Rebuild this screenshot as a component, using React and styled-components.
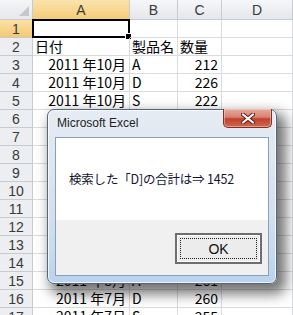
import React from 'react';
import styled, { createGlobalStyle } from 'styled-components';

const GlobalStyle = createGlobalStyle`
  html, body {
    margin: 0;
    padding: 0;
    background: #fff;
    overflow: hidden;
  }
  * { box-sizing: border-box; }
`;

const Screen = styled.div`
  position: relative;
  width: 293px;
  height: 315px;
  overflow: hidden;
  background: #fff;
`;

const Sheet = styled.div`
  display: grid;
  grid-template-columns: 33px 97px 48px 44px 71px;
  grid-template-rows: 20px;
  grid-auto-rows: 18px;
`;

const ColHead = styled.div`
  display: flex;
  align-items: center;
  justify-content: center;
  font-family: "Liberation Sans", Arial, sans-serif;
  font-size: 14px;
  color: #3a3a3a;
  border-right: 1px solid #c6cbd2;
  border-bottom: 1px solid #c6cbd2;
  background: ${p => p.$active
    ? 'linear-gradient(#fbe3ad, #f4cc77)'
    : 'linear-gradient(#f6f7f9, #e4e7eb)'};
  ${p => p.$active && 'border-bottom-color: #e2a93a;'}
`;

const Corner = styled.div`
  position: relative;
  background: linear-gradient(#f4f5f7, #e6e8ec);
  border-right: 1px solid #c6cbd2;
  border-bottom: 1px solid #c6cbd2;
  &::after {
    content: '';
    position: absolute;
    right: 3px;
    bottom: 3px;
    border-left: 10px solid transparent;
    border-bottom: 10px solid #c3c8cf;
  }
`;

const RowHead = styled.div`
  display: flex;
  align-items: center;
  justify-content: center;
  padding-top: 1px;
  font-family: "Liberation Sans", Arial, sans-serif;
  font-size: 14px;
  color: #3a3a3a;
  border-right: 1px solid #c6cbd2;
  border-bottom: 1px solid #c6cbd2;
  background: ${p => p.$active
    ? 'linear-gradient(#fbe0a4, #f3ca73)'
    : '#eceef1'};
  ${p => p.$active && 'border-right-color: #e2a93a;'}
`;

const Cell = styled.div`
  position: relative;
  display: flex;
  align-items: flex-end;
  justify-content: ${p => (p.$right ? 'flex-end' : 'flex-start')};
  padding: 0 3px 0 2px;
  font-family: "Noto Sans CJK JP", "Liberation Sans", sans-serif;
  font-size: 14px;
  line-height: 17px;
  color: #000;
  white-space: nowrap;
  overflow: hidden;
  border-right: 1px solid #d9dbde;
  border-bottom: 1px solid #d9dbde;
`;

const Selected = styled(Cell)`
  overflow: visible;
  border: 2px solid #000;
  margin: -1px 0 0 -1px;
  &::after {
    content: '';
    position: absolute;
    right: -4px;
    bottom: -4px;
    width: 5px;
    height: 5px;
    background: #000;
    border: 1px solid #fff;
  }
`;

const Dialog = styled.div`
  position: absolute;
  left: 47px;
  top: 109px;
  width: 230px;
  height: 175px;
  display: flex;
  flex-direction: column;
  padding: 0 7px 7px 7px;
  border: 1px solid #56667a;
  border-radius: 7px;
  background: linear-gradient(180deg, #e6ecf3 0%, #d9e3ef 45%, #c9dbef 80%, #b9d3ee 100%);
  box-shadow: inset 0 0 0 1px rgba(255, 255, 255, 0.75), 6px 7px 13px 3px rgba(0, 0, 0, 0.55);
`;

const TitleBar = styled.div`
  height: 27px;
  display: flex;
  align-items: center;
  padding: 0 0 2px 2px;
  font-family: "Liberation Sans", Arial, sans-serif;
  font-size: 12px;
  color: #1e1e1e;
`;

const CloseButton = styled.div`
  position: absolute;
  top: -1px;
  right: 4px;
  width: 49px;
  height: 19px;
  display: flex;
  align-items: center;
  justify-content: center;
  border: 1px solid #7b3328;
  border-top: none;
  border-radius: 0 0 5px 5px;
  background: linear-gradient(180deg, #e5aa9e 0%, #d88271 45%, #c2412c 55%, #cf6a4e 100%);
  box-shadow: inset 0 0 0 1px rgba(255, 220, 210, 0.45);
`;

const Client = styled.div`
  flex: 1;
  display: flex;
  flex-direction: column;
  border: 1px solid #8c9fb6;
  background: #fff;
`;

const Message = styled.div`
  height: 82px;
  display: flex;
  align-items: center;
  padding: 0 0 2px 13px;
  font-family: "Noto Sans CJK JP", "Liberation Sans", sans-serif;
  font-size: 12.5px;
  letter-spacing: -0.2px;
  color: #141432;
  white-space: nowrap;
`;

const ButtonArea = styled.div`
  flex: 1;
  display: flex;
  justify-content: flex-end;
  align-items: flex-start;
  padding: 13px 6px 0 0;
  background: #f0f0f0;
`;

const OkButton = styled.div`
  width: 87px;
  height: 31px;
  padding: 3px;
  border: 2px solid #6e6e6e;
  background: #ececec;
  box-shadow: inset 0 0 0 1px #fdfdfd;
`;

const Focus = styled.div`
  height: 100%;
  display: flex;
  align-items: center;
  justify-content: center;
  border: 1px dotted #222;
  font-family: "Liberation Sans", Arial, sans-serif;
  font-size: 14px;
  color: #111;
`;

const rows = [
  null,
  ['日付', '製品名', '数量', true],
  ['2011 年10月', 'A', '212'],
  ['2011 年10月', 'D', '226'],
  ['2011 年10月', 'S', '222'],
  ['2011 年9月', 'A', '231'],
  ['2011 年9月', 'D', '245'],
  ['2011 年9月', 'S', '218'],
  ['2011 年9月', 'A', '240'],
  ['2011 年9月', 'D', '236'],
  ['2011 年8月', 'S', '229'],
  ['2011 年8月', 'A', '250'],
  ['2011 年8月', 'D', '245'],
  ['2011 年8月', 'S', '238'],
  ['2011 年8月', 'A', '261'],
  ['2011 年7月', 'D', '260'],
  ['2011 年7月', 'S', '255'],
];

const CloseX = () => (
  <svg width="14" height="11" viewBox="0 0 14 11">
    <path d="M2 1.5 L12 9.5 M12 1.5 L2 9.5" stroke="#5a1a12" strokeWidth="4" strokeLinecap="round" />
    <path d="M2 1.5 L12 9.5 M12 1.5 L2 9.5" stroke="#fff" strokeWidth="2.2" strokeLinecap="round" />
  </svg>
);

export default function App() {
  return (
    <>
      <GlobalStyle />
      <Screen>
        <Sheet>
          <Corner />
          <ColHead $active>A</ColHead>
          <ColHead>B</ColHead>
          <ColHead>C</ColHead>
          <ColHead>D</ColHead>
          {rows.map((r, i) => (
            <React.Fragment key={i}>
              <RowHead $active={i === 0}>{i + 1}</RowHead>
              {r === null ? (
                <Selected />
              ) : (
                <Cell $right={!r[3]}>{r[0]}</Cell>
              )}
              <Cell>{r ? r[1] : ''}</Cell>
              <Cell $right={r && !r[3]}>{r ? r[2] : ''}</Cell>
              <Cell />
            </React.Fragment>
          ))}
        </Sheet>

        <Dialog>
          <TitleBar>Microsoft Excel</TitleBar>
          <CloseButton><CloseX /></CloseButton>
          <Client>
            <Message>検索した「D]の合計は⇒ 1452</Message>
            <ButtonArea>
              <OkButton>
                <Focus>OK</Focus>
              </OkButton>
            </ButtonArea>
          </Client>
        </Dialog>
      </Screen>
    </>
  );
}
